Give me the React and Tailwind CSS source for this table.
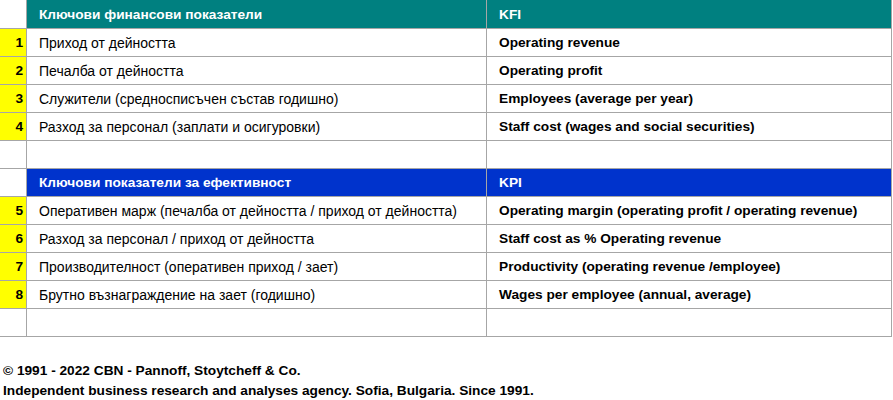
const sections = [
  {
    title: 'Ключови финансови показатели',
    code: 'KFI',
    color: 'bg-[#008080]',
    first: true,
    rows: [
      { n: 1, bg: 'Приход от дейността', en: 'Operating revenue' },
      { n: 2, bg: 'Печалба от дейността', en: 'Operating profit' },
      { n: 3, bg: 'Служители (средносписъчен състав годишно)', en: 'Employees (average per year)' },
      { n: 4, bg: 'Разход за персонал (заплати и осигуровки)', en: 'Staff cost (wages and social securities)' },
    ],
  },
  {
    title: 'Ключови показатели за ефективност',
    code: 'KPI',
    color: 'bg-[#0033cc]',
    first: false,
    rows: [
      { n: 5, bg: 'Оперативен марж (печалба от дейността / приход от дейността)', en: 'Operating margin (operating profit / operating revenue)' },
      { n: 6, bg: 'Разход за персонал / приход от дейността', en: 'Staff cost as % Operating revenue' },
      { n: 7, bg: 'Производителност (оперативен приход / зает)', en: 'Productivity (operating revenue /employee)' },
      { n: 8, bg: 'Брутно възнаграждение на зает (годишно)', en: 'Wages per employee (annual, average)' },
    ],
  },
];

const cell = 'border-r border-b border-[#a6a6a6] flex items-center h-[28px]';

export default function App() {
  return (
    <div className="w-[893px] h-[400px] bg-white text-black text-[14px] font-['Liberation_Sans',Arial,sans-serif] overflow-hidden">
      <div className="grid grid-cols-[27px_460px_405px]">
        {sections.map((s) => {
          const head = s.first ? 'h-[29px] pt-[2px]' : 'pt-[1px]';
          return (
            <div key={s.code} className="contents">
              {/* Section header */}
              <div className={`${cell} ${head}`} />
              <div className={`${cell} ${s.color} ${head} pl-[12px] text-white font-bold text-[13.7px]`}>
                {s.title}
              </div>
              <div className={`${cell} ${s.color} ${head} pl-[12px] text-white font-bold text-[13.7px]`}>
                {s.code}
              </div>

              {s.rows.map((r) => (
                <div key={r.n} className="contents">
                  <div className={`${cell} pt-[2px] bg-[#ffff00] justify-end pr-[3px] font-bold text-[13.7px]`}>{r.n}</div>
                  <div className={`${cell} pt-[1px] pl-[12px] whitespace-nowrap`}>{r.bg}</div>
                  <div className={`${cell} pt-[2px] pl-[12px] font-bold text-[13.7px] whitespace-nowrap`}>{r.en}</div>
                </div>
              ))}

              {/* Blank spacer row */}
              <div className={cell} />
              <div className={cell} />
              <div className={cell} />
            </div>
          );
        })}
      </div>

      {/* Footer */}
      <div className="mt-[24px] pl-[3px] font-bold text-[13.7px] leading-[20px]">
        <p>© 1991 - 2022 CBN - Pannoff, Stoytcheff &amp; Co.</p>
        <p>Independent business research and analyses agency. Sofia, Bulgaria. Since 1991.</p>
      </div>
    </div>
  );
}
